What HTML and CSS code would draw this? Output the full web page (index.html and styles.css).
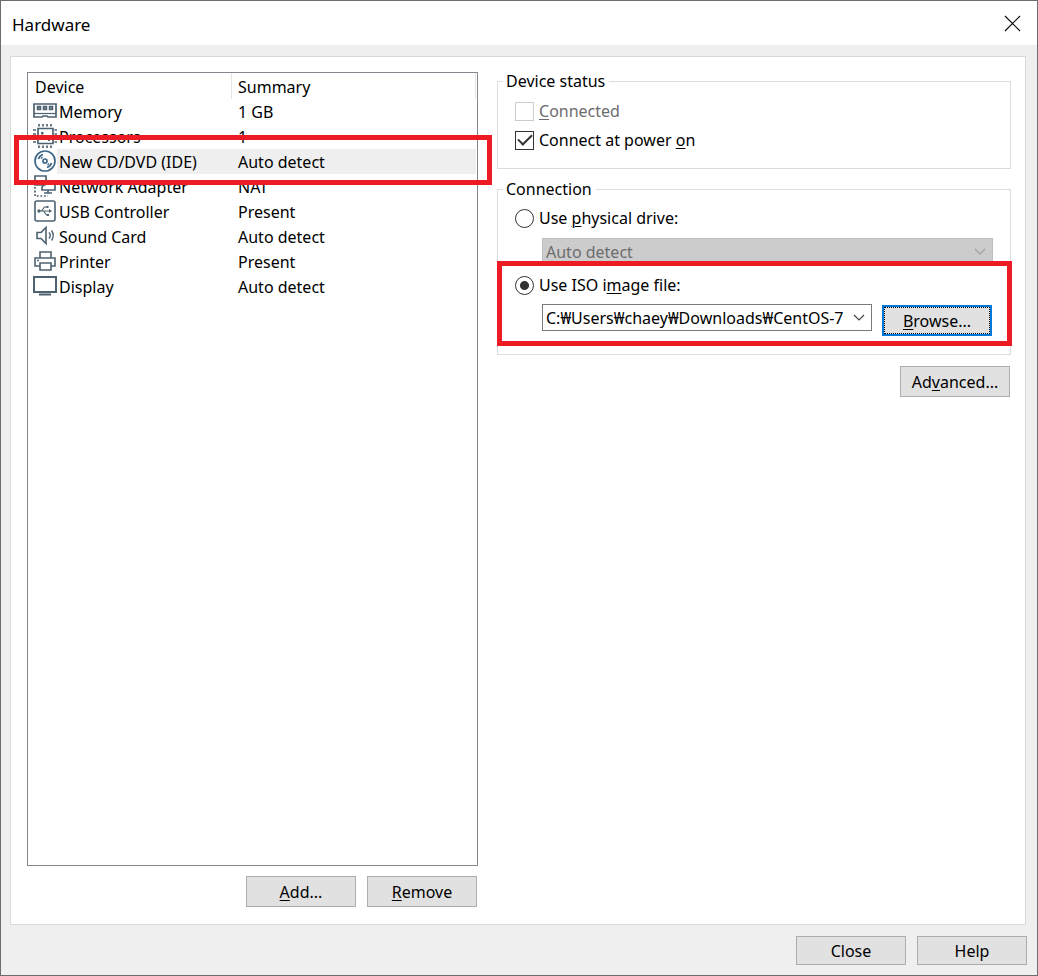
FILE: index.html
```html
<!DOCTYPE html>
<html lang="en">
<head>
<meta charset="utf-8">
<title>Hardware</title>
<link rel="stylesheet" href="styles.css">
</head>
<body>
<div class="window">
  <header class="titlebar">
    <h1 class="title">Hardware</h1>
    <button class="close" type="button" aria-label="Close window">
      <svg width="17" height="17" viewBox="0 0 17 17" fill="none" stroke="#111" stroke-width="1.2"><path d="M1 1l15 15M16 1L1 16"/></svg>
    </button>
  </header>
  <main class="panel">
    <section class="devices">
      <div class="list">
        <table class="table">
          <thead>
            <tr><th class="head-device" colspan="2">Device</th><th class="head-summary">Summary</th></tr>
          </thead>
          <tbody>
            <tr>
              <td class="icon"><svg width="24" height="24" viewBox="0 0 24 24" fill="none" stroke="#4d6270" stroke-width="1.7"><path d="M1 5h22v13h-8l-1-1h-4l-1 1H1z"/><path d="M1 14.500h22" stroke-width="1.200"/><path d="M4.500 7.500h3v3h-3zM10.500 7.500h3v3h-3zM16.500 7.500h3v3h-3z" fill="#8796a0" stroke-width="1.500"/></svg></td>
              <td class="name">Memory</td><td class="summary">1 GB</td>
            </tr>
            <tr>
              <td class="icon"><svg width="24" height="24" viewBox="0 0 24 24" fill="none" stroke="#4d6270" stroke-width="1.700"><path d="M5 4.500h15v15H5z"/><path d="M6 0v2.500M10 0v2.500M14 0v2.500M18 0v2.500M6 21.500V24M10 21.500V24M14 21.500V24M18 21.500V24M0 6h3M0 10h3M0 14h3M0 18h3M21.500 6H24M21.500 10H24M21.500 14H24M21.500 18H24"/><path d="M8 8h2.500v2.500H8zM15 15h2v2h-2z" fill="#4d6270" stroke="none"/></svg></td>
              <td class="name">Processors</td><td class="summary">1</td>
            </tr>
            <tr class="selected">
              <td class="icon"><svg width="24" height="24" viewBox="0 0 24 24" fill="none" stroke="#3f6888" stroke-width="1.700"><circle cx="12" cy="12" r="10"/><circle cx="12" cy="12" r="2"/><path d="M5.500 10q1-3.500 4.500-4.500M18.500 14q-1 3.500-4.500 4.500"/><path d="M8 9.500l1.500-1.500M16 14.500L14.500 16" stroke-width="1.200"/></svg></td>
              <td class="name">New CD/DVD (IDE)</td><td class="summary">Auto detect<span class="marker marker-row"></span></td>
            </tr>
            <tr>
              <td class="icon"><svg width="24" height="24" viewBox="0 0 24 24" fill="none" stroke="#4d6270" stroke-width="1.700"><path d="M8 11H2V2h11v5M6 11h5l-2-2M11 11l-2 2"/><path d="M13 7h9v9H9v-3M15 16v3M11 19h8"/><path d="M2 13v9h13" stroke-dasharray="1.800 1.800"/></svg></td>
              <td class="name">Network Adapter</td><td class="summary">NAT</td>
            </tr>
            <tr>
              <td class="icon"><svg width="24" height="24" viewBox="0 0 24 24" fill="none" stroke="#4d6270" stroke-width="1.600"><rect x="2" y="2" width="20" height="20" rx="2"/><path d="M6 12h11M8.500 12l3-4h3M10.500 12l3 4h2" stroke-width="1.200"/><circle cx="6" cy="12" r="1.700" fill="#4d6270" stroke="none"/><path d="M16 10l3 2-3 2zM13.500 7h2v2h-2zM14 15h2v2h-2z" fill="#4d6270" stroke="none"/></svg></td>
              <td class="name">USB Controller</td><td class="summary">Present</td>
            </tr>
            <tr>
              <td class="icon"><svg width="24" height="24" viewBox="0 0 24 24" fill="none" stroke="#4d6270" stroke-width="1.600"><path d="M4 8.500h4l5-5v16l-5-5H4z"/><path d="M16 8.500q2.500 3 0 6M18.500 6.500q3.500 5 0 10" stroke-width="1.400"/></svg></td>
              <td class="name">Sound Card</td><td class="summary">Auto detect</td>
            </tr>
            <tr>
              <td class="icon"><svg width="24" height="24" viewBox="0 0 24 24" fill="none" stroke="#4d6270" stroke-width="1.600"><path d="M7 9V3h11v6M7 17H2V9h20v8h-4"/><path d="M7 14h11v7H7zM4 11.500h2"/></svg></td>
              <td class="name">Printer</td><td class="summary">Present</td>
            </tr>
            <tr>
              <td class="icon"><svg width="24" height="24" viewBox="0 0 24 24" fill="none" stroke="#4d6270" stroke-width="2"><path d="M1 3h22v15H1zM6 20.500h12"/></svg></td>
              <td class="name">Display</td><td class="summary">Auto detect</td>
            </tr>
          </tbody>
        </table>
      </div>
      <div class="actions list-actions">
        <button class="button" type="button"><u>A</u>dd...</button>
        <button class="button" type="button"><u>R</u>emove</button>
      </div>
    </section>
    <section class="settings">
      <fieldset class="group status">
        <legend class="legend">Device status</legend>
        <label class="option disabled"><input class="check" type="checkbox" disabled><span><u>C</u>onnected</span></label>
        <label class="option"><input class="check" type="checkbox" checked><span>Connect at power <u>o</u>n</span></label>
      </fieldset>
      <fieldset class="group connection">
        <legend class="legend">Connection</legend>
        <label class="option"><input class="radio" type="radio" name="source"><span>Use <u>p</u>hysical drive:</span></label>
        <div class="combo combo-drive">
          <select class="select" disabled aria-label="Physical drive"><option>Auto detect</option></select>
          <svg class="chevron" width="12" height="8" viewBox="0 0 12 8" fill="none" stroke="#a0a0a0" stroke-width="1.200"><path d="M1 1l5 5 5-5"/></svg>
        </div>
        <div class="iso">
          <label class="option"><input class="radio" type="radio" name="source" checked><span>Use ISO i<u>m</u>age file:</span></label>
          <div class="file-row">
            <div class="combo combo-file">
              <select class="select" aria-label="ISO image file"><option>C:₩Users₩chaey₩Downloads₩CentOS-7</option></select>
              <svg class="chevron" width="12" height="8" viewBox="0 0 12 8" fill="none" stroke="#444" stroke-width="1.200"><path d="M1 1l5 5 5-5"/></svg>
            </div>
            <button class="button focused" type="button"><u>B</u>rowse...</button>
          </div>
          <span class="marker marker-iso"></span>
        </div>
      </fieldset>
      <div class="actions advanced"><button class="button" type="button">Ad<u>v</u>anced...</button></div>
    </section>
  </main>
  <footer class="actions footer">
    <button class="button" type="button">Close</button>
    <button class="button" type="button">Help</button>
  </footer>
</div>
</body>
</html>
```
FILE: styles.css
```css
* { box-sizing: border-box; }
body {
  margin: 0;
  color: #000;
  font: 16px/22px "Noto Sans", "Noto Sans CJK KR", sans-serif;
}
button, select, input { font: inherit; color: inherit; margin: 0; }
u { text-underline-offset: 2px; text-decoration-thickness: 1px; }
.window {
  display: flex;
  flex-direction: column;
  min-height: 100vh;
  border: 1px solid #6e6c6d;
  background: #efefef;
}
.titlebar {
  display: flex;
  align-items: center;
  justify-content: space-between;
  height: 44px;
  padding: 0 16px 0 11px;
  background: #fff;
}
.title { margin: 0; font-size: 17px; font-weight: 400; padding-top: 3px; }
.close { display: flex; padding: 0; border: 0; background: none; }
.panel {
  flex: 1;
  display: grid;
  grid-template-columns: 451fr 514fr;
  column-gap: 19px;
  margin: 11px 11px 11px 9px;
  padding: 15px 14px 17px 16px;
  border: 1px solid #d9d9d9;
  background: #fff;
}
.devices { display: flex; flex-direction: column; gap: 10px; min-width: 0; }
.list { flex: 1; border: 1px solid #828790; padding-right: 1px; }
.table { display: grid; grid-template-columns: 29px 175px 1fr; }
.table thead, .table tbody, .table tr { display: contents; }
.table th { height: 26px; padding: 3px 7px 0; border-right: 1px solid #e5e5e5; text-align: left; font-weight: 400; }
.table td { height: 25px; padding: 0; white-space: nowrap; }
.table .head-device { grid-column: span 2; }
.table .head-summary { padding-left: 6px; }
.table .icon { padding-left: 5px; }
.icon svg { display: block; }
.table .name { padding: 2px 0 0 2px; }
.table .summary { padding: 2px 0 0 6px; }
.selected .name, .selected .summary { background: #efefef; }
.table tbody .selected { display: grid; grid-column: 1 / -1; grid-template-columns: subgrid; position: relative; }
.marker { position: absolute; border: 5px solid #ed1c24; pointer-events: none; }
.marker-row { inset: -14px -16px -11px -14px; }
.marker-iso { inset: -12px -20px -10px -18px; }
.actions { display: flex; justify-content: flex-end; gap: 11px; }
.list-actions { padding-right: 1px; }
.button {
  width: 110px;
  height: 31px;
  padding: 1px 0 0;
  border: 1px solid #adadad;
  background: #e1e1e1;
}
.focused { border: 2px solid #0078d7; outline: 1px dotted #000; outline-offset: -3px; }
.footer { padding: 0 10px 10px 0; }
.footer .button { height: 29px; }
.settings { min-width: 0; }
.group { margin: 0; min-width: 0; border: 1px solid #dcdcdc; }
.legend { padding: 0 4px 0 3px; }
.status { margin-top: -2px; padding: 7px 17px 16px 5px; }
.connection { margin-top: 9px; padding: 6px 18px 18px 5px; }
.group > .option, .iso { margin-left: 12px; }
.option { display: flex; align-items: center; gap: 5px; height: 24px; }
.status .option + .option { margin-top: 5px; }
.disabled { color: #6d6d6d; }
.check, .radio { appearance: none; width: 19px; height: 19px; border: 1px solid #333; background: #fff; }
.check { display: grid; place-items: center; }
.check:disabled { border-color: #ccc; }
.check:checked::before {
  content: "";
  width: 12px;
  height: 6px;
  border: solid #333;
  border-width: 0 0 2px 2px;
  transform: translateY(-2px) rotate(-45deg);
}
.radio { border-radius: 50%; }
.radio:checked { background: radial-gradient(circle, #333 0 4px, #fff 5px); }
.combo { position: relative; height: 27px; }
.select {
  display: block;
  appearance: none;
  width: 100%;
  height: 100%;
  padding: 0 22px 0 3px;
  border: 1px solid #7a7a7a;
  border-radius: 0;
  background: #fff;
}
.select:disabled { border-color: #bfbfbf; background: #ccc; color: #6d6d6d; opacity: 1; }
.chevron { position: absolute; right: 7px; top: 10px; pointer-events: none; }
.combo-drive { margin: 8px -1px 0 39px; }
.iso { position: relative; margin-top: 8px; }
.file-row { display: flex; gap: 10px; margin: 7px 0 0 27px; }
.combo-file { flex: 1; min-width: 0; }
.file-row .button { margin-top: 1px; }
.advanced { margin-top: 11px; padding-right: 1px; }
```
